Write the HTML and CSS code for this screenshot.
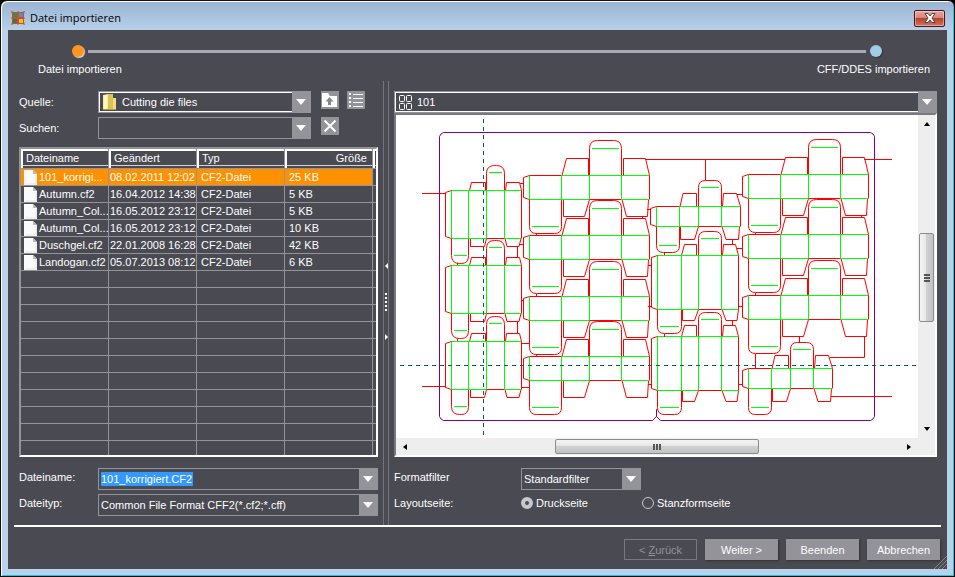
FILE: index.html
```
<!DOCTYPE html>
<html lang="de">
<head>
  <meta charset="UTF-8">
  <meta name="viewport" content="width=device-width, initial-scale=1.0">
  <title>Datei importieren</title>
  <link rel="stylesheet" href="styles.css">
</head>
<body>
  <!-- Symbole -->
  <svg class="sprite" width="0" height="0" aria-hidden="true">
    <symbol id="arrow" viewBox="0 0 10 6"><path d="M0 0h10L5 6z" fill="#fff"/></symbol>
    <symbol id="page" viewBox="0 0 13 15">
      <path d="M0 0h9l4 4v11H0z" fill="#fafafa"/>
      <path d="M9 0v4h4z" fill="#b9b9bd"/>
      <path d="M12 5v9H1" fill="none" stroke="#e4e4e4"/>
    </symbol>
  </svg>

  <div class="window">
    <header class="titlebar">
      <svg class="app-icon" width="16" height="16" viewBox="0 0 16 16">
        <path d="M1 1l3 1h3l1-1 1 1h3l3-1-1 3v3l1 1-1 1v3l1 3-3-1H9l-1 1-1-1H4l-3 1 1-3V9L1 8l1-1V4z" fill="#d8472f"/>
        <path d="M3 3h4v4H3z" fill="#1f9a48"/>
        <path d="M9 3h4v4H9z" fill="#2a9fd0"/>
        <path d="M3 9h4v4H3z" fill="#128a50"/>
        <path d="M9 9h4v4H9z" fill="#e8c61c"/>
      </svg>
      <h1>Datei importieren</h1>
      <button class="close" type="button" aria-label="Schließen">
        <svg width="12" height="10" viewBox="0 0 12 10"><path d="M1 .5h3l2 2.500 2-2.500h3L8 5l3 4.500H8L6 7 4 9.500H1L4 5z" fill="#fff" stroke="#4b4553"/></svg>
      </button>
    </header>

    <main class="dialog">
      <div class="steps">
        <div class="track">
          <span class="dot dot-active"></span>
          <span class="line"></span>
          <span class="dot"></span>
        </div>
        <div class="step-names">
          <span>Datei importieren</span>
          <span>CFF/DDES importieren</span>
        </div>
      </div>

      <div class="panes">
        <section class="files">
          <div class="row">
            <label for="quelle">Quelle:</label>
            <div class="combo combo-source focused">
              <div class="field">
                <svg width="16" height="16" viewBox="0 0 16 16">
                  <path d="M1 1l5-1v15l-5 1z" fill="#f6e9a0"/>
                  <path d="M6 0h5v15H6z" fill="#dcc356"/>
                  <path d="M2 2l3-1v13l-3 1z" fill="#fff6c4"/>
                  <path d="M11 4h3v11h-3z" fill="#efdd88"/>
                  <path d="M1 15.500h13" stroke="#b89a30"/>
                </svg>
                <select id="quelle"><option>Cutting die files</option></select>
              </div>
              <span class="arrow"><svg width="10" height="6"><use href="#arrow"/></svg></span>
            </div>
            <button class="tool" type="button" aria-label="Übergeordneter Ordner">
              <svg width="18" height="18" viewBox="0 0 18 18">
                <path d="M1 2h6l2 3h7v11H1z" fill="#fff"/>
                <path d="M8.500 6l4 4.500H10V14H7v-3.500H4.500z" fill="#85858c"/>
              </svg>
            </button>
            <button class="tool" type="button" aria-label="Liste">
              <svg width="18" height="18" viewBox="0 0 18 18" stroke="#fff">
                <path d="M6 3.500h10M6 7.500h10M6 11.500h10M6 15.500h10"/>
                <path d="M2 3h2M2 7h2M2 11h2M2 15h2" stroke-width="2"/>
              </svg>
            </button>
          </div>
          <div class="row">
            <label for="suchen">Suchen:</label>
            <div class="combo combo-source">
              <input class="field" id="suchen" type="text">
              <button class="arrow" type="button" aria-label="Suchverlauf"><svg width="10" height="6"><use href="#arrow"/></svg></button>
            </div>
            <button class="tool" type="button" aria-label="Suche löschen">
              <svg width="18" height="18" viewBox="0 0 18 18"><path d="M3.500 3.500l11 11M14.500 3.500l-11 11" stroke="#fff" stroke-width="2"/></svg>
            </button>
          </div>

          <div class="list">
            <table>
              <thead>
                <tr><th>Dateiname</th><th>Geändert</th><th>Typ</th><th class="size">Größe</th><th class="rest"></th></tr>
              </thead>
              <tbody>
                <tr class="selected"><td class="name"><svg width="13" height="15"><use href="#page"/></svg>101_korrigi...</td><td class="date">08.02.2011 12:02</td><td>CF2-Datei</td><td>25 KB</td><td></td></tr>
                <tr><td class="name"><svg width="13" height="15"><use href="#page"/></svg>Autumn.cf2</td><td class="date">16.04.2012 14:38</td><td>CF2-Datei</td><td>5 KB</td><td></td></tr>
                <tr><td class="name"><svg width="13" height="15"><use href="#page"/></svg>Autumn_Col...</td><td class="date">16.05.2012 23:12</td><td>CF2-Datei</td><td>5 KB</td><td></td></tr>
                <tr><td class="name"><svg width="13" height="15"><use href="#page"/></svg>Autumn_Col...</td><td class="date">16.05.2012 23:12</td><td>CF2-Datei</td><td>10 KB</td><td></td></tr>
                <tr><td class="name"><svg width="13" height="15"><use href="#page"/></svg>Duschgel.cf2</td><td class="date">22.01.2008 16:28</td><td>CF2-Datei</td><td>42 KB</td><td></td></tr>
                <tr><td class="name"><svg width="13" height="15"><use href="#page"/></svg>Landogan.cf2</td><td class="date">05.07.2013 08:12</td><td>CF2-Datei</td><td>6 KB</td><td></td></tr>
                <tr><td></td><td></td><td></td><td></td><td></td></tr>
                <tr><td></td><td></td><td></td><td></td><td></td></tr>
                <tr><td></td><td></td><td></td><td></td><td></td></tr>
                <tr><td></td><td></td><td></td><td></td><td></td></tr>
                <tr><td></td><td></td><td></td><td></td><td></td></tr>
                <tr><td></td><td></td><td></td><td></td><td></td></tr>
                <tr><td></td><td></td><td></td><td></td><td></td></tr>
                <tr><td></td><td></td><td></td><td></td><td></td></tr>
                <tr><td></td><td></td><td></td><td></td><td></td></tr>
                <tr><td></td><td></td><td></td><td></td><td></td></tr>
                <tr class="last"><td></td><td></td><td></td><td></td><td></td></tr>
              </tbody>
            </table>
          </div>

          <div class="row options">
            <label for="dateiname">Dateiname:</label>
            <div class="combo">
              <div class="field"><input class="marked" id="dateiname" type="text" value="101_korrigiert.CF2"></div>
              <button class="arrow" type="button" aria-label="Dateinamen anzeigen"><svg width="10" height="6"><use href="#arrow"/></svg></button>
            </div>
          </div>
          <div class="row options">
            <label for="dateityp">Dateityp:</label>
            <div class="combo">
              <select class="field" id="dateityp"><option>Common File Format CFF2(*.cf2;*.cff)</option></select>
              <span class="arrow"><svg width="10" height="6"><use href="#arrow"/></svg></span>
            </div>
          </div>
        </section>

        <div class="splitter">
          <svg width="4" height="90" viewBox="0 0 4 90" fill="#fff">
            <path d="M4 5v6L1 8z"/>
            <path d="M1 35h2v2H1zM1 39h2v2H1zM1 43h2v2H1zM1 47h2v2H1zM1 51h2v2H1z"/>
            <path d="M1 76v6l3-3z"/>
          </svg>
        </div>

        <section class="preview">
          <div class="combo focused">
            <div class="field">
              <svg width="15" height="15" viewBox="0 0 15 15" fill="none" stroke="#fff">
                <rect x="1.500" y=".5" width="5" height="6" rx="1"/>
                <rect x="8.500" y=".5" width="5" height="6" rx="1"/>
                <rect x="1.500" y="8.500" width="5" height="6" rx="1"/>
                <rect x="8.500" y="8.500" width="5" height="6" rx="1"/>
              </svg>
              <select aria-label="Layout"><option>101</option></select>
            </div>
            <span class="arrow"><svg width="10" height="6"><use href="#arrow"/></svg></span>
          </div>

          <div class="viewer">
            <svg class="layout" viewBox="396 115 522 323" preserveAspectRatio="xMinYMin meet">
              <defs>
                <!-- Faltschachtel, breit -->
                <g id="box-b">
                  <path class="cut" d="M529.500 175.500l-6 2v20l6 2M529.500 175.500h32M589.500 199.500h32M649.500 175.500v24M529.500 199.500v27q0 7 7 7h18q7 0 7-7v-27M589.500 175.500v-27q0-8 8-8h16q8 0 8 8v27M562 175.500l4.500-17h22v17M623.500 175.500v-17h22l4 17M563.500 199.500v17h21l5-17M622 199.500l4.500 17h21l1-17"/>
                  <path class="fold" d="M529.500 176v23M561.500 176v23M589.500 176v23M621.500 176v23M562 175.500h87M530 199.500h59M622 199.500h27M532 226.500h27M592 148.500h27"/>
                </g>
                <!-- Faltschachtel, hoch -->
                <g id="box-a">
                  <path class="cut" d="M451.500 190.500l-6 2v44l6 2M451.500 190.500h18M486.500 238.500h18M521.500 190.500v48M451.500 238.500v17q0 8 8 8h2q7 0 7-8v-17M486.500 190.500v-17q0-8 8-8h2q8 0 8 8v17M469.500 190.500l2-8h14v8M505.500 190.500l1-8h13l2 8M470.500 238.500v8h14l2-8M505 238.500l2 8h12l2-8"/>
                  <path class="fold" d="M451.500 191v47M468.500 191v47M486.500 191v47M504.500 191v47M452 190.500h69M452 238.500h34M505 238.500h16M454 255.500h13M489 172.500h13"/>
                </g>
                <!-- Faltschachtel, klein -->
                <g id="box-c">
                  <path class="cut" d="M656.500 206.500l-6 2v16l6 2M656.500 206.500h23M698.500 226.500h23M740.500 206.500v20M656.500 226.500v19q0 7 7 7h9q7 0 7-7v-19M698.500 206.500v-19q0-7 7-7h9q7 0 7 7v19M680 206.500l3-13h13.500v13M722.500 206.500l1-13h13l4 13M680.500 226.500v13h14l4-13M722 226.500l4 13h12.500l1-13"/>
                  <path class="fold" d="M656.500 207v19M679.500 207v19M698.500 207v19M721.500 207v19M680 206.500h60M657 226.500h41M722 226.500h18M659 245.500h18M701 187.500h18"/>
                </g>
                <!-- Faltschachtel, gross -->
                <g id="box-d">
                  <path class="cut" d="M657.500 255.500l-6 2v50l6 2M657.500 255.500h24M698.500 309.500h23M738.500 255.500v54M657.500 309.500v17q0 7 7 7h10q7 0 7-7v-17M698.500 255.500v-17q0-7 7-7h9q7 0 7 7v17M681.500 255.500l3-11h12v11M722.500 255.500l1-11h12l3 11M682.500 309.500v11h12l4-11M722 309.500l4 11h11l1.500-11"/>
                  <path class="fold" d="M657.500 256v53M681.500 256v53M698.500 256v53M721.500 256v53M658 255.500h80M658 309.500h40M722 309.500h16M660 326.500h19M701 238.500h18"/>
                </g>
              </defs>
              <path class="sheet" d="M443.500 132.500h427q3 1 4 4v280q-1 3-4 4h-210l-4-4v-7 7l-4 4h-209q-3-1-4-4v-280q1-3 4-4z"/>
              <use href="#box-a"/>
              <use href="#box-a" y="75"/>
              <use href="#box-a" y="151"/>
              <use href="#box-b"/>
              <use href="#box-b" y="60"/>
              <use href="#box-b" y="121"/>
              <use href="#box-b" y="181"/>
              <use href="#box-c"/>
              <use href="#box-d"/>
              <use href="#box-d" y="81"/>
              <use href="#box-b" x="219" y="-1"/>
              <use href="#box-b" x="219" y="59"/>
              <use href="#box-b" x="219" y="120"/>
              <use href="#box-c" x="92" y="162"/>
              <path class="cut" d="M422 193.500h24M422 386.500h24M645 159.500h140M864 159.500h28M705.500 160v20M831 396.500h61M864.500 336v21.500H830M755.500 354v14M799.500 336v6"/>
              <path class="cut" d="M517.500 247v10M517.500 322v12M520 183.500h4M520 244.500h4M521 300.500h3M522 343.500h8M522 387.500h8M457.500 263v2M457.500 339v2M536.500 233v3M536.500 294v3M536.500 354v3M647 209.500h4M648 265.500h3M648 306.500h3M648 384.500h4M737 194.500h6M737 248.500h6M739 306.500h4M739 384.500h4M732.500 240v4M732.500 321v4M664.500 252v3M664.500 334v3M755.500 233v2M755.500 293v2M642.500 217v2M861.500 216v2"/>
              <path class="axis" d="M483.500 119v317M400 365.500h517"/>
            </svg>
            <div class="scroll-v">
              <svg width="6" height="4" viewBox="0 0 6 4"><path d="M3 0l3 4H0z"/></svg>
              <div class="lane"><div class="thumb"></div></div>
              <svg width="6" height="4" viewBox="0 0 6 4"><path d="M0 0h6L3 4z"/></svg>
            </div>
            <div class="scroll-h">
              <svg width="4" height="6" viewBox="0 0 4 6"><path d="M4 0v6L0 3z"/></svg>
              <div class="lane"><div class="thumb"></div></div>
              <svg width="4" height="6" viewBox="0 0 4 6"><path d="M0 0l4 3-4 3z"/></svg>
            </div>
            <div class="corner"></div>
          </div>

          <div class="row options">
            <label for="filter">Formatfilter</label>
            <div class="combo combo-filter">
              <select class="field" id="filter"><option>Standardfilter</option></select>
              <span class="arrow"><svg width="10" height="6"><use href="#arrow"/></svg></span>
            </div>
          </div>
          <div class="row options" role="radiogroup" aria-labelledby="seite">
            <span class="caption" id="seite">Layoutseite:</span>
            <label class="radio"><input type="radio" name="seite" checked>Druckseite</label>
            <label class="radio"><input type="radio" name="seite">Stanzformseite</label>
          </div>
        </section>
      </div>

      <footer class="buttons">
        <button type="button" disabled>&lt; <u>Z</u>urück</button>
        <button type="button">Weiter &gt;</button>
        <button type="button">Beenden</button>
        <button type="button">Abbrechen</button>
      </footer>
      <svg class="grip" width="14" height="14" viewBox="0 0 14 14"><path d="M1 14L14 1M5 14l9-9M9 14l5-5" stroke="#85858c"/></svg>
    </main>
  </div>
</body>
</html>
```
FILE: styles.css
```
* {
  box-sizing: border-box;
}
body {
  margin: 0;
  background: #000;
  color: #fff;
  font-family: "Liberation Sans", Arial, sans-serif;
  font-size: 11px;
  line-height: 14px;
}
button, input, select {
  margin: 0;
  padding: 0;
  border: 0;
  border-radius: 0;
  background: none;
  color: inherit;
  font: inherit;
  appearance: none;
}
svg {
  display: block;
  flex: none;
}
.sprite {
  position: absolute;
}

/* Fenster */
.window {
  display: flex;
  flex-direction: column;
  min-height: 100vh;
  padding: 0 7px 7px 6px;
  border: 1px solid #111;
  border-radius: 7px 7px 0 0;
  background: linear-gradient(#98b3d1, #b9d1ea 30px);
  box-shadow: inset 1px 1px 0 #fff, inset -1px -1px 0 #2bc0dc;
}
.titlebar {
  display: flex;
  align-items: center;
  height: 29px;
  padding: 5px 2px 0 3px;
}
.titlebar h1 {
  flex: 1;
  margin: 0 0 0 4px;
  color: #000;
  font-family: "Open Sans", "Noto Sans", sans-serif;
  font-size: 11px;
  font-weight: normal;
}
.close {
  display: flex;
  align-items: center;
  justify-content: center;
  width: 31px;
  height: 17px;
  border: 1px solid #4a1420;
  border-radius: 2px;
  background: linear-gradient(#e8a79c, #d98477 45%, #b8412c 50%, #d2745c);
  box-shadow: inset 0 0 0 1px rgba(255, 255, 255, 0.4);
}
.dialog {
  position: relative;
  flex: 1;
  display: flex;
  flex-direction: column;
  margin-left: 1px;
  padding: 15px 6px 9px;
  background: #4a4a52;
}

/* Schritte */
.steps {
  padding: 0 11px 0 24px;
}
.track {
  display: flex;
  align-items: center;
  gap: 4px;
  padding: 0 48px 0 34px;
}
.dot {
  width: 12px;
  height: 12px;
  border-radius: 50%;
  background: #9fcde4;
  box-shadow: 1px 1px 1px #333;
}
.dot-active {
  background: #ff9421;
  box-shadow: 1px 1px 1px #ddd;
}
.line {
  flex: 1;
  height: 3px;
  background: #a9a9b5;
}
.step-names {
  display: flex;
  justify-content: space-between;
  margin-top: 5px;
}

/* Bereiche */
.panes {
  flex: 1;
  display: flex;
  border-bottom: 2px solid #fff;
}
.files {
  width: 364px;
  padding: 15px 0 9px 5px;
}
.row {
  display: flex;
  align-items: flex-start;
  margin-bottom: 4px;
}
.row > label:first-child,
.caption {
  width: 79px;
  padding-top: 4px;
}
.options > label:first-child,
.options .caption {
  padding-top: 2px;
}
.files .row:last-child,
.preview .row:last-child {
  margin-bottom: 0;
}
.combo {
  display: flex;
  flex: 1;
  height: 22px;
  border: 1px solid #939399;
}
.combo-source {
  flex: none;
  width: 213px;
}
.field {
  flex: 1;
  display: flex;
  align-items: center;
  min-width: 0;
  padding: 0 2px;
  border-radius: 0;
}
.field select {
  flex: 1;
  margin-left: 4px;
}
.focused .field {
  border: 1px solid #fff;
  border-right: 0;
}
.arrow {
  display: flex;
  align-items: center;
  justify-content: center;
  width: 18px;
  background: #939399;
}
option {
  background: #4a4a52;
}
.marked {
  width: 92px;
  background: #3399ff;
}
.tool {
  width: 18px;
  height: 18px;
  margin: 0 0 0 10px;
  background: #939399;
}
.tool + .tool {
  margin-left: 8px;
}

/* Dateiliste */
.list {
  margin: 8px 0 11px;
  border: 2px solid #fff;
  border-top-color: #939399;
  border-left-color: #939399;
}
table {
  width: 100%;
  table-layout: fixed;
  border-collapse: separate;
  border-spacing: 0;
}
th, td {
  height: 17px;
  padding: 0 0 0 4px;
  border-right: 1px solid #939399;
  border-bottom: 1px solid #939399;
  font-weight: normal;
  text-align: left;
  white-space: nowrap;
  overflow: hidden;
}
th {
  height: 20px;
  padding: 0 0 2px 5px;
  width: 88px;
  box-shadow: inset 2px 2px 0 #fff, inset 0 -2px 0 #4a4a52, inset 0 -3px 0 #d4d4d8;
}
td:last-child, th:last-child {
  border-right: 0;
}
.name {
  padding-left: 3px;
}
.date {
  padding-left: 1px;
}
.size {
  padding-right: 5px;
  text-align: right;
}
.rest {
  width: auto;
}
td svg {
  float: left;
  margin-right: 2px;
}
.selected td:not(:last-child) {
  background: #ff9000;
}
.last td {
  height: 14px;
  border-bottom: 0;
}

/* Trenner */
.splitter {
  display: flex;
  align-items: center;
  justify-content: center;
  width: 6px;
  margin: 5px 5px 0;
  border: solid #74747e;
  border-width: 0 1px;
}

/* Vorschau */
.preview {
  flex: 1;
  min-width: 0;
  padding: 15px 4px 9px 0;
}
.viewer {
  display: grid;
  grid-template-columns: 1fr 17px;
  grid-template-rows: 1fr 17px;
  margin-bottom: 11px;
  border: 2px solid #fff;
  border-top-color: #77777e;
  border-left-color: #77777e;
  background: #fff;
}
.layout {
  width: 100%;
}
.cut, .fold, .sheet, .axis {
  fill: none;
  stroke-width: 1;
}
.cut {
  stroke: #f00;
}
.fold {
  stroke: #0f0;
}
.sheet {
  stroke: #800080;
}
.axis {
  stroke: #006060;
  stroke-dasharray: 4 4;
}
.scroll-v, .scroll-h {
  display: flex;
  align-items: center;
  background: #eee;
}
.scroll-v {
  flex-direction: column;
  padding: 7px 0;
}
.scroll-h {
  padding: 0 7px;
}
.corner {
  background: #eee;
}
.lane {
  flex: 1;
  display: flex;
}
.scroll-v .lane {
  flex-direction: column;
  width: 15px;
  padding: 107px 0 105px;
}
.scroll-h .lane {
  height: 15px;
  padding: 0 148px;
}
.thumb {
  flex: 1;
  border: 1px solid #8c8c8c;
  border-radius: 2px;
  background:
    repeating-linear-gradient(90deg, #555 0 2px, transparent 2px 3px) center / 8px 6px no-repeat,
    linear-gradient(#f4f4f4, #e6e6e6 48%, #d0d0d2 50%, #c2c2c6);
}
.scroll-v .thumb {
  background:
    repeating-linear-gradient(#555 0 2px, transparent 2px 3px) center / 6px 8px no-repeat,
    linear-gradient(90deg, #f4f4f4, #e6e6e6 48%, #d0d0d2 50%, #c2c2c6);
}
.preview .row > label:first-child,
.caption {
  width: 127px;
}
.combo-filter {
  flex: none;
  width: 120px;
}
.radio {
  display: flex;
  align-items: center;
  gap: 3px;
  width: 121px;
  padding-top: 2px;
}
.radio input {
  width: 12px;
  height: 12px;
  border: 1px solid #c8c8cc;
  border-radius: 50%;
}
.radio input:checked {
  border-width: 4px;
  background: #4a4a52;
}

/* Schaltflächen */
.buttons {
  display: flex;
  justify-content: flex-end;
  gap: 8px;
  padding: 12px 1px 0 0;
}
.buttons button {
  width: 73px;
  height: 21px;
  background: #939399;
  box-shadow: 1px 1px 2px #333;
}
.buttons button:disabled {
  border: 1px solid #77777e;
  background: none;
  box-shadow: none;
  color: #939399;
}
.grip {
  position: absolute;
  right: 0;
  bottom: 0;
}
```
